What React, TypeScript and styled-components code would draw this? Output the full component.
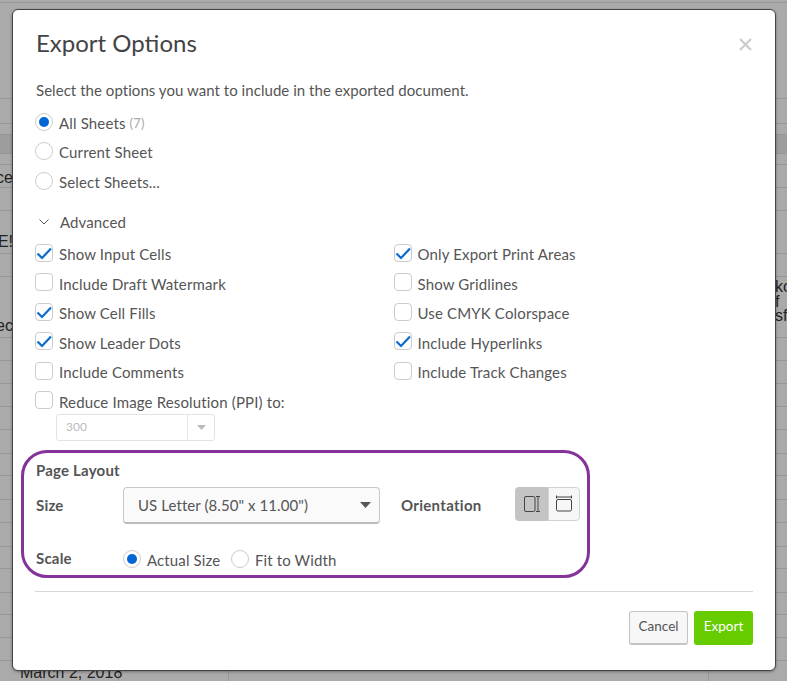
import React from "react";
import styled, { createGlobalStyle } from "styled-components";

const Global = createGlobalStyle`
  html, body { margin: 0; padding: 0; background: #aaaaaa; }
  body { font-family: "Lato", "Liberation Sans", sans-serif; }
  * { box-sizing: border-box; }
`;

const Page = styled.div`
  position: relative;
  width: 787px;
  height: 681px;
  overflow: hidden;
  background: #aaaaaa;
`;

const Sheet = styled.div`
  display: flex;
  flex-direction: column;
  font-family: "Liberation Sans", Arial, sans-serif;
  font-size: 16px;
  color: #222;
`;

const SheetRow = styled.div<{ $h: number; $band?: boolean }>`
  height: ${(p) => p.$h}px;
  flex: none;
  display: flex;
  justify-content: space-between;
  align-items: center;
  border-bottom: 1px solid #979797;
  background: ${(p) => (p.$band ? "#9d9d9d" : "transparent")};
`;

const LeftCell = styled.span<{ $shift?: number }>`
  width: 13px;
  display: flex;
  justify-content: flex-end;
  line-height: 16px;
  margin-top: ${(p) => (p.$shift ?? 0) * 2}px;
`;

const RightCell = styled.span`
  width: 12px;
  line-height: 14.5px;
  overflow: hidden;
  white-space: pre;
  margin-top: -10px;
`;

const BottomRow = styled.div`
  height: 20px;
  flex: none;
  display: flex;
  padding-left: 20px;
  line-height: 24px;
`;

const DateCell = styled.span<{ $w: number }>`
  width: ${(p) => p.$w}px;
  flex: none;
  border-right: 1px solid #979797;
  white-space: nowrap;
`;

const Modal = styled.div`
  position: absolute;
  left: 12px;
  top: 9px;
  width: 764px;
  height: 662px;
  background: #fff;
  border: 1px solid #444;
  border-radius: 6px;
  box-shadow: 0 1px 3px rgba(0, 0, 0, 0.35);
  padding: 0 22px;
  color: #555;
  font-size: 15px;
`;

const Title = styled.h1`
  margin: 0;
  height: 64px;
  padding-left: 1px;
  display: flex;
  align-items: center;
  font-size: 24px;
  font-weight: 400;
  color: #444;
`;

const Close = styled.button`
  position: absolute;
  right: 22px;
  top: 24px;
  width: 16px;
  height: 20px;
  padding: 0;
  border: 0;
  background: none;
  display: flex;
  align-items: center;
  justify-content: center;
`;

const Description = styled.p`
  margin: 4px 0 0;
  padding-left: 1px;
  height: 24px;
  line-height: 24px;
  letter-spacing: 0.045px;
`;

const RadioGroup = styled.div`
  margin-top: 6px;
  display: flex;
  flex-direction: column;
`;

const OptionRow = styled.label`
  height: 29.45px;
  display: flex;
  align-items: center;
  white-space: nowrap;
  letter-spacing: 0.15px;
`;

const RadioMark = styled.span<{ $on?: boolean }>`
  width: 18px;
  height: 18px;
  flex: none;
  border-radius: 50%;
  border: 1px solid #ccc;
  background: #fff;
  margin-right: 6px;
  margin-top: -2px;
  display: flex;
  align-items: center;
  justify-content: center;
  &::after {
    content: "";
    display: ${(p) => (p.$on ? "block" : "none")};
    width: 10px;
    height: 10px;
    border-radius: 50%;
    background: #0066d6;
  }
`;

const Muted = styled.span`
  color: #aaa;
  font-size: 13px;
  margin-left: 4px;
`;

const Advanced = styled.div`
  margin-top: 14px;
  height: 24px;
  display: flex;
  align-items: center;
  gap: 11px;
  padding-left: 4px;
  letter-spacing: 0.1px;
`;

const Columns = styled.div`
  margin-top: 5.4px;
  display: grid;
  grid-template-columns: 358.5px 1fr;
`;

const Column = styled.div`
  display: flex;
  flex-direction: column;
`;

const CheckMark = styled.span`
  width: 18px;
  height: 18px;
  flex: none;
  border: 1px solid #ccc;
  border-radius: 4px;
  background: #fff;
  margin-right: 6px;
  margin-top: -3px;
  position: relative;
  svg { position: absolute; left: -1px; top: -1px; }
`;

const Stepper = styled.div`
  margin: -2.4px 0 0 21px;
  width: 159px;
  height: 27px;
  border: 1px solid #e3e3e3;
  border-radius: 3px;
  display: flex;
  background: #fff;
`;

const StepperValue = styled.span`
  flex: 1;
  padding-left: 9px;
  font-size: 12px;
  line-height: 24px;
  color: #bbb;
  border-right: 1px solid #e3e3e3;
`;

const StepperArrow = styled.span`
  width: 26px;
  display: flex;
  align-items: center;
  justify-content: center;
`;

const Highlight = styled.section`
  margin: 9px 0 0 -14px;
  width: 569px;
  height: 128px;
  border: 3px solid #833399;
  border-radius: 26px;
  padding: 7px 0 0 11px;
`;

const Strong = styled.div`
  font-weight: 700;
  color: #555;
  font-size: 15px;
  letter-spacing: 0.2px;
`;

const Heading = styled(Strong)`
  height: 20px;
  line-height: 20px;
  padding-left: 1px;
`;

const LayoutRow = styled.div`
  margin-top: 7px;
  display: flex;
  align-items: flex-start;
`;

const FieldLabel = styled(Strong)`
  width: 88px;
  flex: none;
  padding-left: 1px;
  line-height: 37px;
`;

const SelectBox = styled.div`
  width: 257px;
  height: 37px;
  flex: none;
  border: 1px solid #c8c8c8;
  border-bottom: 2px solid #bdbdbd;
  border-radius: 4px;
  background: #fafafa;
  padding: 0 8px 0 14px;
  display: flex;
  align-items: center;
  justify-content: space-between;
  letter-spacing: 0.08px;
`;

const Orientation = styled(Strong)`
  margin-left: 21px;
  width: 114px;
  line-height: 37px;
  letter-spacing: 0.3px;
`;

const Toggle = styled.div`
  display: flex;
  width: 65px;
  height: 34px;
`;

const ToggleButton = styled.div<{ $active?: boolean; $side: "l" | "r" }>`
  width: ${(p) => (p.$side === "l" ? 33 : 32)}px;
  height: 34px;
  display: flex;
  align-items: center;
  justify-content: center;
  background: ${(p) => (p.$active ? "#c4c4c4" : "#f7f7f7")};
  border: ${(p) => (p.$active ? "none" : "1px solid #d2d2d2")};
  border-radius: ${(p) => (p.$side === "l" ? "4px 0 0 4px" : "0 4px 4px 0")};
`;

const ScaleRow = styled.div`
  margin-top: 24px;
  display: flex;
  align-items: center;
  height: 24px;
`;

const ScaleLabel = styled(Strong)`
  width: 88px;
  flex: none;
  padding-left: 1px;
  margin-top: -4px;
`;

const ScaleOption = styled.label<{ $w?: number }>`
  display: flex;
  align-items: center;
  white-space: nowrap;
  letter-spacing: 0.12px;
  width: ${(p) => (p.$w ? `${p.$w}px` : "auto")};
`;

const ScaleRadio = styled(RadioMark)`
  margin-right: 6px;
  margin-top: -1px;
`;

const Divider = styled.hr`
  margin: 13px 0 0 0;
  border: 0;
  border-top: 1px solid #d8d8d8;
`;

const Footer = styled.div`
  margin-top: 19px;
  display: flex;
  justify-content: flex-end;
  gap: 6px;
`;

const Button = styled.button<{ $primary?: boolean }>`
  width: 59px;
  height: 34px;
  padding: 0 0 3px;
  font-family: inherit;
  font-size: 13.5px;
  border-radius: 3px;
  cursor: pointer;
  color: ${(p) => (p.$primary ? "#fff" : "#555")};
  background: ${(p) => (p.$primary ? "#66cc00" : "#f7f7f7")};
  border: 1px solid ${(p) => (p.$primary ? "#66cc00" : "#c4c4c4")};
  border-bottom-width: 2px;
`;

const Tick = () => (
  <svg width="18" height="18" viewBox="0 0 18 18" fill="none">
    <path d="M2.5 9.5 L7 14 L16 4.5" stroke="#0a6ccf" strokeWidth="2.2" />
  </svg>
);

const Check = ({ on, children }: { on?: boolean; children: React.ReactNode }) => (
  <OptionRow>
    <CheckMark>{on && <Tick />}</CheckMark>
    {children}
  </OptionRow>
);

const sheetRows: { h: number; band?: boolean; left?: string; right?: string; shift?: number }[] = [
  { h: 3 },
  { h: 96 },
  { h: 25 },
  { h: 11 },
  { h: 19, band: true },
  { h: 11 },
  { h: 23, left: "ce", shift: 2 },
  { h: 23 },
  { h: 43, left: "E!", shift: 10 },
  { h: 23 },
  { h: 61, left: "ec", shift: 19, right: "ko\nf\nsf" },
  { h: 23 },
  { h: 23 },
  { h: 23 },
  { h: 23 },
  { h: 24 },
  { h: 22 },
  { h: 24 },
  { h: 23 },
  { h: 24 },
  { h: 22 },
  { h: 24 },
  { h: 22 },
  { h: 23 },
  { h: 23 },
];

export default function App() {
  return (
    <Page>
      <Global />
      <Sheet>
        {sheetRows.map((r, i) => (
          <SheetRow key={i} $h={r.h} $band={r.band}>
            <LeftCell $shift={r.shift}>{r.left}</LeftCell>
            <RightCell>{r.right}</RightCell>
          </SheetRow>
        ))}
        <BottomRow>
          <DateCell $w={99}>March 2, 2018</DateCell>
          <DateCell $w={110} />
          <DateCell $w={480} />
        </BottomRow>
      </Sheet>
      <Modal>
        <Title>Export Options</Title>
        <Close aria-label="Close">
          <svg width="13" height="13" viewBox="0 0 13 13">
            <path d="M1 1 L12 12 M12 1 L1 12" stroke="#cccccc" strokeWidth="2.2" />
          </svg>
        </Close>
        <Description>Select the options you want to include in the exported document.</Description>
        <RadioGroup>
          <OptionRow>
            <RadioMark $on />
            All Sheets<Muted>(7)</Muted>
          </OptionRow>
          <OptionRow>
            <RadioMark />
            Current Sheet
          </OptionRow>
          <OptionRow>
            <RadioMark />
            Select Sheets...
          </OptionRow>
        </RadioGroup>
        <Advanced>
          <svg width="10" height="6" viewBox="0 0 10 6" fill="none">
            <path d="M0.5 0.5 L5 5 L9.5 0.5" stroke="#555" strokeWidth="1" />
          </svg>
          Advanced
        </Advanced>
        <Columns>
          <Column>
            <Check on>Show Input Cells</Check>
            <Check>Include Draft Watermark</Check>
            <Check on>Show Cell Fills</Check>
            <Check on>Show Leader Dots</Check>
            <Check>Include Comments</Check>
            <Check>Reduce Image Resolution (PPI) to:</Check>
          </Column>
          <Column>
            <Check on>Only Export Print Areas</Check>
            <Check>Show Gridlines</Check>
            <Check>Use CMYK Colorspace</Check>
            <Check on>Include Hyperlinks</Check>
            <Check>Include Track Changes</Check>
          </Column>
        </Columns>
        <Stepper>
          <StepperValue>300</StepperValue>
          <StepperArrow>
            <svg width="9" height="5" viewBox="0 0 9 5">
              <path d="M0 0 H9 L4.5 5 Z" fill="#bbb" />
            </svg>
          </StepperArrow>
        </Stepper>
        <Highlight>
          <Heading>Page Layout</Heading>
          <LayoutRow>
            <FieldLabel>Size</FieldLabel>
            <SelectBox>
              US Letter (8.50" x 11.00")
              <svg width="11" height="6" viewBox="0 0 11 6">
                <path d="M0 0 H11 L5.5 6 Z" fill="#555" />
              </svg>
            </SelectBox>
            <Orientation>Orientation</Orientation>
            <Toggle>
              <ToggleButton $active $side="l">
                <svg width="18" height="18" viewBox="0 0 18 18" fill="none" stroke="#444" strokeWidth="1">
                  <rect x="1.5" y="1.5" width="10.5" height="15" rx="1.5" />
                  <path d="M15 1.5 V16.5 M13 1.5 H17 M13 16.5 H17" />
                </svg>
              </ToggleButton>
              <ToggleButton $side="r">
                <svg width="18" height="18" viewBox="0 0 18 18" fill="none" stroke="#444" strokeWidth="1">
                  <rect x="1.5" y="4.5" width="15" height="11.5" rx="1.5" />
                  <path d="M1.5 2 H16.5 M1.5 0.5 V3.5 M16.5 0.5 V3.5" />
                </svg>
              </ToggleButton>
            </Toggle>
          </LayoutRow>
          <ScaleRow>
            <ScaleLabel>Scale</ScaleLabel>
            <ScaleOption $w={108}>
              <ScaleRadio $on />
              Actual Size
            </ScaleOption>
            <ScaleOption>
              <ScaleRadio />
              Fit to Width
            </ScaleOption>
          </ScaleRow>
        </Highlight>
        <Divider />
        <Footer>
          <Button>Cancel</Button>
          <Button $primary>Export</Button>
        </Footer>
      </Modal>
    </Page>
  );
}
